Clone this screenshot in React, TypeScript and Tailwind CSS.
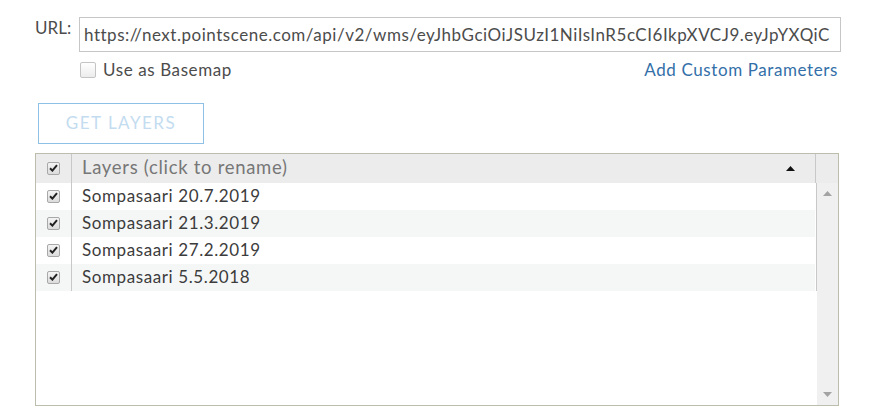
import React from 'react';

const FONT = { fontFamily: 'Lato, "Open Sans", sans-serif' };

const layers = [
  'Sompasaari 20.7.2019',
  'Sompasaari 21.3.2019',
  'Sompasaari 27.2.2019',
  'Sompasaari 5.5.2018',
];

function TinyCheck() {
  return (
    <span className="flex h-[13px] w-[13px] items-center justify-center rounded-[2px] border border-[#a8a8a8] bg-gradient-to-b from-[#f4f4f4] to-[#dcdcdc]">
      <svg width="9" height="8" viewBox="0 0 9 8">
        <path d="M1 4.2 L3.4 6.6 L8 1.2" stroke="#222" strokeWidth="2" fill="none" />
      </svg>
    </span>
  );
}

export default function App() {
  return (
    <div className="h-[414px] w-[875px] overflow-hidden bg-white text-[17px] tracking-[0.6px] text-[#4c4c4c]" style={FONT}>
      {/* url row */}
      <div className="flex pl-[35px] pt-[17px]">
        <span className="w-[36px] pt-[1px] leading-[20px] tracking-normal">URL:</span>
        <div className="ml-[8px] flex h-[35px] w-[762px] items-center overflow-hidden whitespace-nowrap border border-[#c6c6c6] pl-[4px] tracking-[0.52px]">
          https://next.pointscene.com/api/v2/wms/eyJhbGciOiJSUzI1NiIsInR5cCI6IkpXVCJ9.eyJpYXQiC
        </div>
      </div>

      <div className="ml-[80px] mr-[37px] mt-[5px] flex items-center justify-between">
        <label className="flex items-center gap-[7px]">
          <span className="h-[16px] w-[16px] rounded-[2px] border border-[#c4c4c4] bg-gradient-to-b from-white to-[#ececec]" />
          Use as Basemap
        </label>
        <a className="text-[#336fa8]">Add Custom Parameters</a>
      </div>

      <button className="ml-[38px] mt-[20px] flex h-[41px] w-[166px] items-center justify-center border border-[#8fc1e7] tracking-[1.5px] text-[#c3dcf0]">
        GET LAYERS
      </button>

      {/* layer table */}
      <div className="ml-[35px] mt-[9px] flex h-[253px] w-[804px] flex-col border border-[#bdbdae]">
        <div className="flex h-[29px] bg-[#ececec]">
          <div className="flex w-[36px] items-center justify-center border-r border-[#c8c8c8]">
            <TinyCheck />
          </div>
          <div className="flex flex-1 items-center justify-between pl-[10px] pr-[20px] text-[#777]">
            <span className="text-[18.5px] tracking-[0.7px]">Layers (click to rename)</span>
            <svg width="9" height="5" viewBox="0 0 9 5">
              <path d="M0 5 L4.5 0 L9 5Z" fill="#111" />
            </svg>
          </div>
          <div className="w-[23px] border-l border-[#c8c8c8]" />
        </div>
        <div className="flex flex-1">
          <div className="flex flex-1 flex-col">
            <div className="flex">
              <div className="flex-1">
                {layers.map((name, i) => (
                  <div key={name} className={`flex h-[27px] ${i % 2 ? 'bg-[#f5f7f7]' : 'bg-white'}`}>
                    <div className="flex w-[36px] items-center justify-center border-r border-[#c8c8c8]">
                      <TinyCheck />
                    </div>
                    <div className="flex items-center pl-[10px] text-[#3c3c3c]">{name}</div>
                  </div>
                ))}
              </div>
              <div className="w-[2px] border-r border-[#c8c8c8]" />
            </div>
          </div>
          <div className="flex w-[21px] flex-col items-center justify-between bg-[#f0f0f0] py-[8px]">
            <svg width="9" height="5" viewBox="0 0 9 5">
              <path d="M0 5 L4.5 0 L9 5Z" fill="#a3a3a3" />
            </svg>
            <svg width="9" height="5" viewBox="0 0 9 5">
              <path d="M0 0 L4.5 5 L9 0Z" fill="#a3a3a3" />
            </svg>
          </div>
        </div>
      </div>
    </div>
  );
}
